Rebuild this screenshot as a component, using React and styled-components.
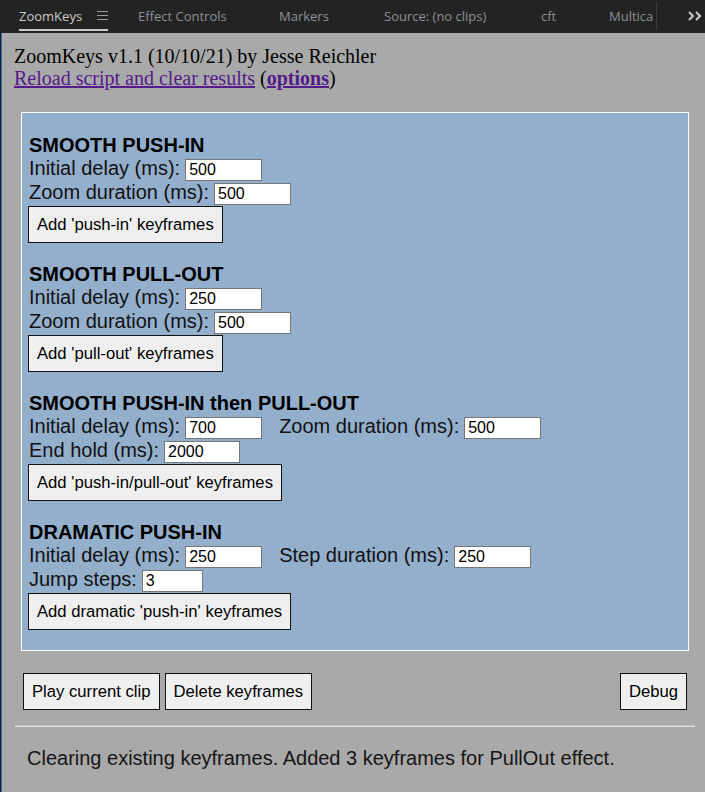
import React from "react";
import styled, { createGlobalStyle } from "styled-components";

const Global = createGlobalStyle`
  html, body { margin: 0; padding: 0; background: #a9a9a9; }
  body { width: 705px; height: 792px; overflow: hidden; }
`;

const Shell = styled.div`
  width: 705px;
  height: 792px;
  display: flex;
  flex-direction: column;
  background: #a9a9a9;
`;

const TabBar = styled.div`
  height: 33px;
  flex: none;
  background: #232323;
  display: flex;
  align-items: stretch;
  padding-left: 19px;
  font-family: "Open Sans", "Noto Sans", sans-serif;
  font-size: 13px;
  position: relative;
  overflow: hidden;
`;

const Tab = styled.div`
  width: ${(p) => p.$w}px;
  flex: none;
  display: flex;
  align-items: center;
  gap: 15px;
  color: ${(p) => (p.$active ? "#cbcbcb" : "#8d9095")};
  white-space: nowrap;
  overflow: hidden;
  position: relative;
  padding-bottom: 2px;
`;

const Underline = styled.div`
  position: absolute;
  left: -2px;
  top: 29px;
  width: 91px;
  height: 2px;
  background: #c9c9c9;
`;

const Separator = styled.div`
  width: 1px;
  flex: none;
  margin: 2px 0 3px;
  background: #3d3d3d;
`;

const More = styled.div`
  margin-left: auto;
  width: 17px;
  display: flex;
  align-items: center;
  padding-bottom: 2px;
`;

const Body = styled.div`
  flex: 1;
  padding: 12px 10px 0 14px;
  box-shadow: inset 1px 0 #1e1e1e, inset 2px 0 #3569b0;
`;

const Title = styled.div`
  font-family: "Liberation Serif", "Times New Roman", serif;
  font-size: 20px;
  line-height: 22px;
  color: #000;
`;

const Link = styled.a`
  color: #551a8b;
  text-decoration: underline;
  font-weight: ${(p) => (p.$bold ? 700 : 400)};
  cursor: pointer;
`;

const Panel = styled.div`
  margin: 23px 6px 0 7px;
  border: 1px solid #ffffff;
  background: #94afcc;
  padding: 20px 6px 20px;
  display: flex;
  flex-direction: column;
  gap: 19px;
  font-family: "Liberation Sans", Arial, sans-serif;
  font-size: 20px;
  color: #000;
`;

const Section = styled.div`
  display: flex;
  flex-direction: column;
`;

const Heading = styled.div`
  font-weight: 700;
  line-height: 24px;
  padding-left: 1px;
`;

const Row = styled.div`
  height: 24px;
  line-height: 23px;
  white-space: nowrap;
  padding-left: 1px;
`;

const Label = styled.span`
  margin-left: ${(p) => p.$gap || 0}px;
  color: #111;
`;

const Input = styled.input`
  display: inline-block;
  vertical-align: baseline;
  box-sizing: border-box;
  width: ${(p) => p.$w || 77}px;
  height: 22px;
  margin: 0 0 0 5px;
  padding: 1px 3px;
  border: 1px solid #767676;
  background: #fff;
  font-family: "Liberation Sans", Arial, sans-serif;
  font-size: 16px;
  color: #000;
  outline: none;
`;

const Button = styled.button`
  display: block;
  box-sizing: border-box;
  height: 37px;
  padding: 0 8px;
  border: 1px solid #111;
  border-radius: 0;
  background: #efefef;
  font-family: "Liberation Sans", Arial, sans-serif;
  font-size: 16.67px;
  color: #000;
  white-space: nowrap;
  cursor: pointer;
`;

const SectionButton = styled(Button)`
  margin-top: 1px;
  align-self: flex-start;
`;

const Actions = styled.div`
  margin: 22px 8px 0 9px;
  display: flex;
  gap: 5px;
`;

const Push = styled.div`
  flex: 1;
`;

const Divider = styled.div`
  margin: 15px 0 0 1px;
  height: 0;
  border-top: 1px solid #c4c4c4;
  border-bottom: 1px solid #dedede;
`;

const Status = styled.div`
  margin-top: 19.5px;
  padding-left: 13px;
  font-family: "Liberation Sans", Arial, sans-serif;
  font-size: 20px;
  line-height: 23px;
  color: #151515;
`;

const Hamburger = () => (
  <svg width="11" height="9" viewBox="0 0 11 9">
    <g stroke="#9c9c9c" strokeWidth="1">
      <line x1="0" y1="0.5" x2="11" y2="0.5" />
      <line x1="0" y1="4.5" x2="11" y2="4.5" />
      <line x1="0" y1="8.5" x2="11" y2="8.5" />
    </g>
  </svg>
);

const Chevrons = () => (
  <svg width="14" height="10" viewBox="0 0 14 10">
    <g fill="none" stroke="#c4c4c4" strokeWidth="2.2" strokeLinejoin="miter">
      <polyline points="1,1 5,5 1,9" />
      <polyline points="8,1 12,5 8,9" />
    </g>
  </svg>
);

const sections = [
  {
    title: "SMOOTH PUSH-IN",
    rows: [
      [{ label: "Initial delay (ms):", value: "500" }],
      [{ label: "Zoom duration (ms):", value: "500" }],
    ],
    button: "Add 'push-in' keyframes",
  },
  {
    title: "SMOOTH PULL-OUT",
    rows: [
      [{ label: "Initial delay (ms):", value: "250" }],
      [{ label: "Zoom duration (ms):", value: "500" }],
    ],
    button: "Add 'pull-out' keyframes",
  },
  {
    title: "SMOOTH PUSH-IN then PULL-OUT",
    rows: [
      [
        { label: "Initial delay (ms):", value: "700" },
        { label: "Zoom duration (ms):", value: "500", gap: 17 },
      ],
      [{ label: "End hold (ms):", value: "2000", w: 76 }],
    ],
    button: "Add 'push-in/pull-out' keyframes",
  },
  {
    title: "DRAMATIC PUSH-IN",
    rows: [
      [
        { label: "Initial delay (ms):", value: "250" },
        { label: "Step duration (ms):", value: "250", gap: 17 },
      ],
      [{ label: "Jump steps:", value: "3", w: 61 }],
    ],
    button: "Add dramatic 'push-in' keyframes",
  },
];

const tabs = [
  { name: "Effect Controls", w: 141 },
  { name: "Markers", w: 105 },
  { name: "Source: (no clips)", w: 157 },
  { name: "cft", w: 68 },
  { name: "Multica", w: 47 },
];

export default function App() {
  return (
    <>
      <Global />
      <Shell>
        <TabBar>
          <Tab $w={119} $active>
            <span>ZoomKeys</span>
            <Hamburger />
            <Underline />
          </Tab>
          {tabs.map((t) => (
            <Tab key={t.name} $w={t.w}>
              {t.name}
            </Tab>
          ))}
          <Separator />
          <More>
            <Chevrons />
          </More>
        </TabBar>
        <Body>
          <Title>ZoomKeys v1.1 (10/10/21) by Jesse Reichler</Title>
          <Title>
            <Link>Reload script and clear results</Link> (
            <Link $bold>options</Link>)
          </Title>
          <Panel>
            {sections.map((s) => (
              <Section key={s.title}>
                <Heading>{s.title}</Heading>
                {s.rows.map((r, i) => (
                  <Row key={i}>
                    {r.map((f) => (
                      <React.Fragment key={f.label}>
                        <Label $gap={f.gap}>{f.label}</Label>
                        <Input $w={f.w} defaultValue={f.value} />
                      </React.Fragment>
                    ))}
                  </Row>
                ))}
                <SectionButton>{s.button}</SectionButton>
              </Section>
            ))}
          </Panel>
          <Actions>
            <Button>Play current clip</Button>
            <Button>Delete keyframes</Button>
            <Push />
            <Button>Debug</Button>
          </Actions>
          <Divider />
          <Status>
            Clearing existing keyframes. Added 3 keyframes for PullOut effect.
          </Status>
        </Body>
      </Shell>
    </>
  );
}
